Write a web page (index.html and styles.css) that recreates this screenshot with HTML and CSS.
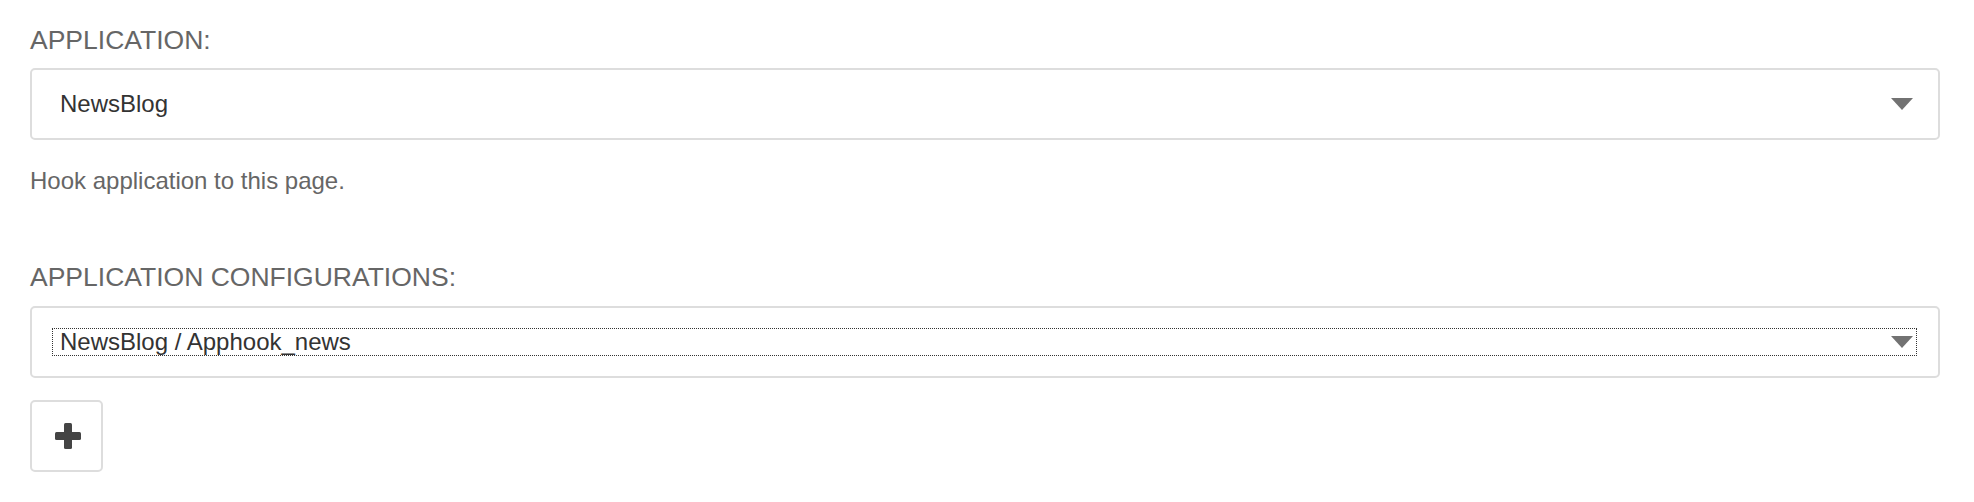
FILE: index.html
```html
<!DOCTYPE html>
<html>
<head>
<meta charset="utf-8">
<link rel="stylesheet" href="styles.css">
</head>
<body>
<form class="form">
  <div class="form-row">
    <label class="field-label">APPLICATION:</label>
    <div class="field-box">
      <div class="select">
        <span class="select-value">NewsBlog</span>
        <span class="select-arrow"></span>
      </div>
    </div>
    <p class="help">Hook application to this page.</p>
  </div>
  <div class="form-row form-row-second">
    <label class="field-label">APPLICATION CONFIGURATIONS:</label>
    <div class="field-box">
      <div class="select select-focused">
        <span class="select-value">NewsBlog / Apphook_news</span>
        <span class="select-arrow"></span>
      </div>
    </div>
    <button type="button" class="add-btn" aria-label="Add">
      <svg width="26" height="26" viewBox="0 0 26 26">
        <rect x="9" y="0" width="8" height="26" rx="1.5" fill="#444"/>
        <rect x="0" y="9" width="26" height="8" rx="1.5" fill="#444"/>
      </svg>
    </button>
  </div>
</form>
</body>
</html>
```

FILE: styles.css
```css
html, body {
  margin: 0;
  padding: 0;
  background: #fff;
}

body {
  font-family: "Liberation Sans", Arial, Helvetica, sans-serif;
  color: #333;
}

.form {
  padding: 24px 34px 0 30px;
}

.form-row {
  display: flex;
  flex-direction: column;
  align-items: stretch;
}

.form-row-second {
  margin-top: 66px;
}

.field-label {
  display: block;
  font-size: 26.5px;
  line-height: 32px;
  color: #666;
}

.field-box {
  margin-top: 12px;
  height: 72px;
  box-sizing: border-box;
  border: 2px solid #ddd;
  border-radius: 5px;
  display: flex;
  align-items: center;
  padding: 0 21px 0 20px;
}

.form-row-second .field-box {
  margin-top: 13px;
}

.select {
  flex: 1;
  height: 28px;
  box-sizing: border-box;
  border: 1px solid transparent;
  display: flex;
  align-items: center;
  justify-content: space-between;
  padding: 0 3px 0 7px;
}

.select-focused {
  border: 1px dotted #333;
}

.select-value {
  font-size: 24px;
  line-height: 26px;
  color: #333;
}

.select-arrow {
  width: 0;
  height: 0;
  border-left: 11px solid transparent;
  border-right: 11px solid transparent;
  border-top: 12px solid #727272;
}

.help {
  margin: 27px 0 0 0;
  font-size: 24px;
  line-height: 28px;
  color: #666;
}

.add-btn {
  margin-top: 22px;
  align-self: flex-start;
  width: 73px;
  height: 72px;
  box-sizing: border-box;
  border: 2px solid #ddd;
  border-radius: 5px;
  background: #fff;
  display: flex;
  align-items: center;
  justify-content: center;
  padding: 0 0 0 3px;
  cursor: pointer;
}
```
